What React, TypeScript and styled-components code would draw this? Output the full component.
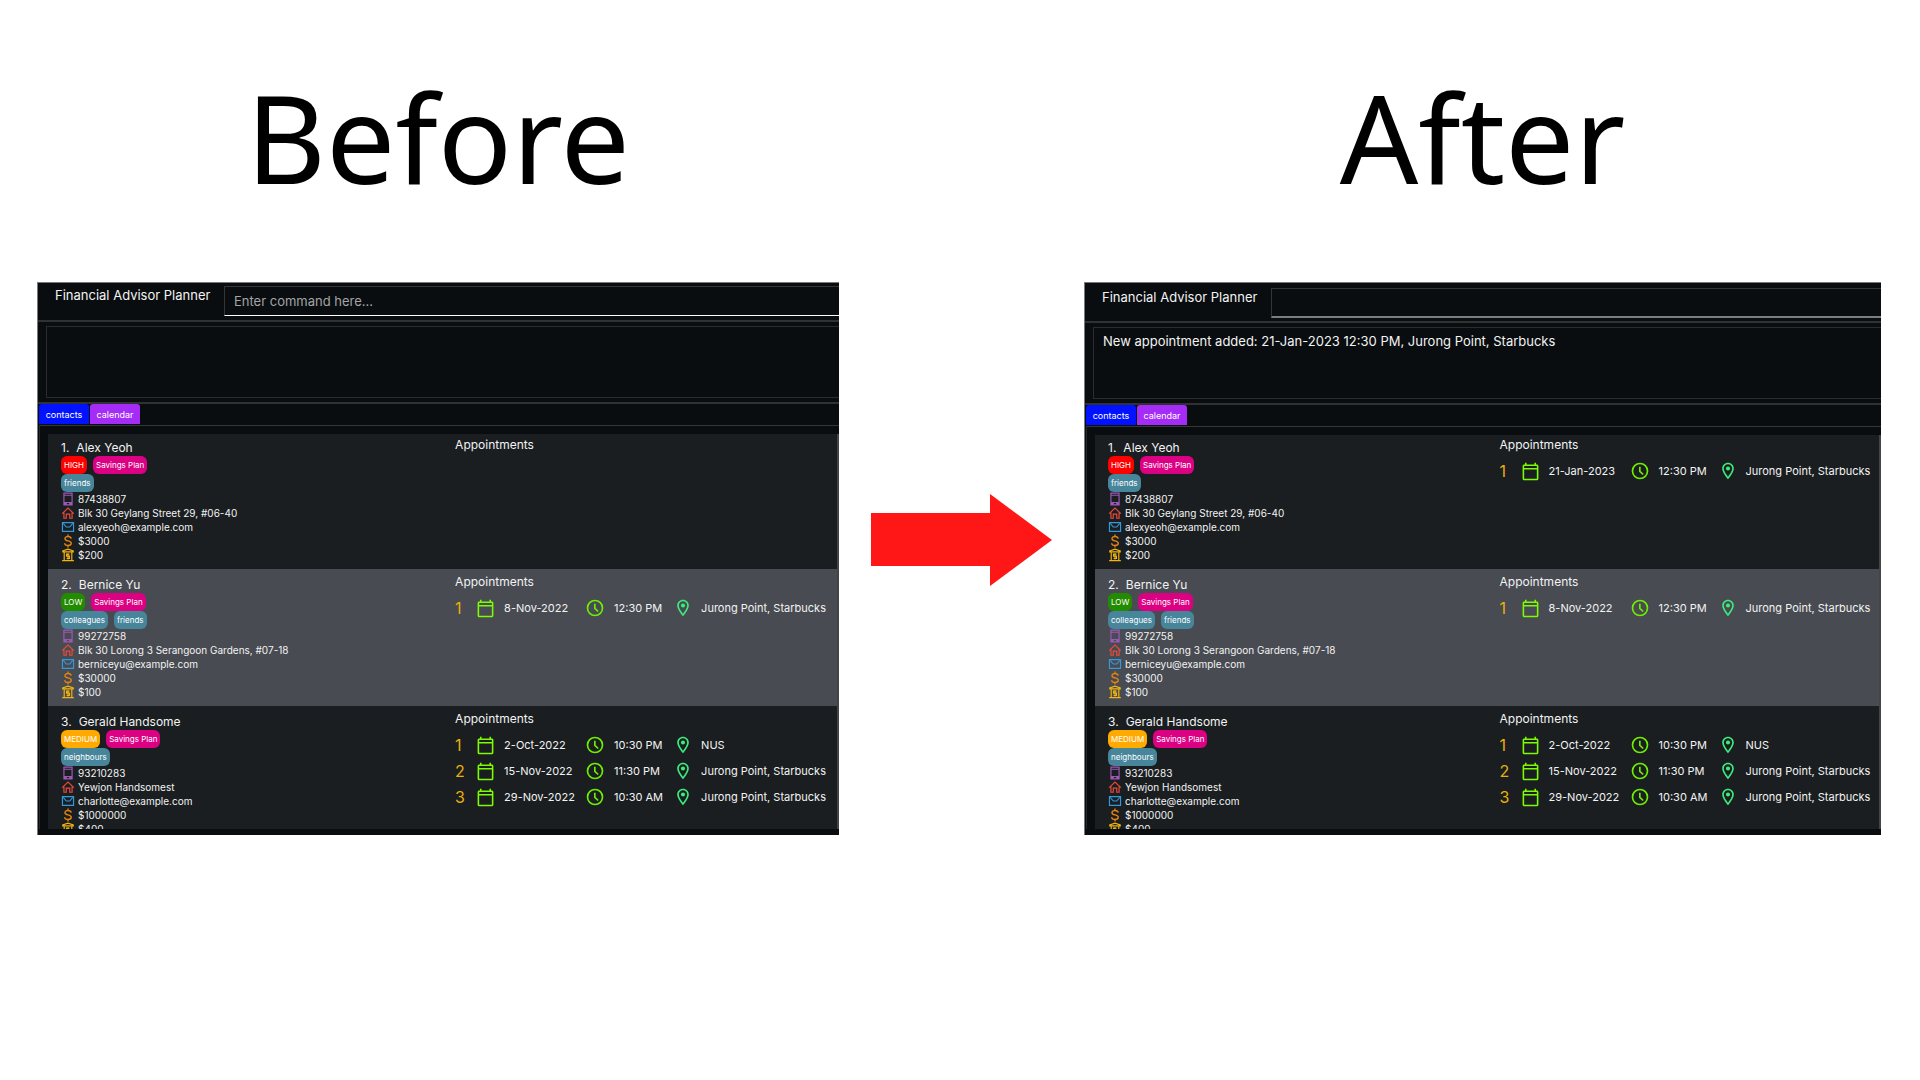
import React from "react";
import styled, { createGlobalStyle } from "styled-components";

const GlobalStyle = createGlobalStyle`
  * { box-sizing: border-box; }
  body {
    margin: 0;
    background: #fff;
    font-family: Inter, "Liberation Sans", sans-serif;
  }
`;

const Page = styled.main`
  display: grid;
  grid-template-columns: minmax(0, 802fr) 245px minmax(0, 797fr);
  padding: 58px 39px 60px 37px;
`;

const Column = styled.section`
  min-width: 0;
`;

const Heading = styled.h1`
  margin: 0;
  height: 224px;
  font-family: "Noto Sans", "Open Sans", sans-serif;
  font-weight: 400;
  font-size: 123px;
  line-height: 158px;
  text-align: center;
  color: #000;
`;

const ArrowHolder = styled.div`
  display: flex;
  justify-content: center;
  padding-top: 436px;
`;

const Window = styled.div`
  padding-bottom: 6px;
  overflow: hidden;
  border-top: 1px solid #77797a;
  border-left: 1px solid #77797a;
  background: #090d0f;
  color: #f2f3f3;
`;

const CommandBar = styled.div<{ $active: boolean }>`
  display: grid;
  grid-template-columns: 186px minmax(0, 1fr);
  height: ${p => (p.$active ? 37 : 38)}px;
  padding-top: ${p => (p.$active ? 3 : 5)}px;
`;

const AppTitle = styled.label`
  padding-left: 17px;
  font-size: 13px;
  line-height: 18px;
  white-space: nowrap;
`;

const CommandInput = styled.input<{ $active: boolean }>`
  height: 30px;
  width: 100%;
  padding: 0 9px;
  border: 1px solid #333536;
  border-right: 0;
  border-bottom: ${p => (p.$active ? "1px solid #fff" : "2px solid #7a7e80")};
  border-radius: 0;
  outline: 0;
  background: transparent;
  color: #fff;
  font: 13px Inter, sans-serif;
  &::placeholder {
    color: #a3a5a6;
    opacity: 1;
  }
`;

const ResultArea = styled.div`
  padding: 4px 0 4px 8px;
  border: solid #2f3132;
  border-width: 2px 0;
`;

const ResultBox = styled.output`
  display: block;
  height: 72px;
  padding: 4px 9px;
  border: 1px solid #2a2c2d;
  border-right: 0;
  font-size: 13px;
  line-height: 18px;
`;

const TabBar = styled.div`
  display: flex;
  gap: 1px;
  padding: 0 0 1px 1px;
`;

const Tab = styled.button<{ $color: string }>`
  min-width: 50px;
  height: 20px;
  padding: 0 6px;
  border: 0;
  border-radius: 3px 3px 0 0;
  background: ${p => p.$color};
  color: #fff;
  font: 9px Inter, sans-serif;
`;

const TabPane = styled.div`
  margin-left: 1px;
  padding: 8px 0 0 8px;
  border-top: 1px solid #343637;
  border-left: 1px solid #25282a;
`;

const ContactList = styled.ol<{ $active: boolean }>`
  height: ${p => (p.$active ? 395 : 394)}px;
  margin: 0;
  padding: 0;
  list-style: none;
  overflow: hidden;
  border-right: 2px solid #424546;
`;

const Contact = styled.li<{ $selected: boolean; $scrolled: number }>`
  display: grid;
  grid-template-columns: 51.6% minmax(0, 1fr);
  height: 137px;
  margin-top: -${p => p.$scrolled}px;
  background: ${p => (p.$selected ? "#484b51" : "#1a1e20")};
`;

const Details = styled.div`
  padding: 6px 0 0 13px;
`;

const Name = styled.h2`
  display: flex;
  gap: 7px;
  height: 18px;
  margin: 0;
  font-weight: 400;
  font-size: 12px;
  line-height: 20px;
`;

const Tags = styled.div`
  display: flex;
  gap: 6px;
  height: 18px;
`;

const Tag = styled.span<{ $color: string }>`
  padding: 0 3px;
  border-radius: 6px;
  background: ${p => p.$color};
  color: #fff;
  font-size: 8px;
  line-height: 18px;
`;

const Field = styled.div`
  display: flex;
  align-items: center;
  gap: 3px;
  height: 14px;
  font-size: 10px;
  line-height: 14px;
  white-space: nowrap;
  svg { flex: none; }
`;

const Appointments = styled.div`
  padding-top: 4px;
`;

const AppointmentsTitle = styled.h3`
  margin: 0 0 4px;
  font-weight: 400;
  font-size: 12px;
  line-height: 18px;
`;

const Appointment = styled.div`
  display: grid;
  grid-template-columns: 21px 28px 81px 29px 59px 28px minmax(0, 1fr);
  align-items: center;
  height: 26px;
  font-size: 11px;
  line-height: 18px;
  white-space: nowrap;
  svg { display: block; }
`;

const Index = styled.span`
  color: #e6b00b;
  font-size: 16px;
`;

const TAG_COLORS: Record<string, string> = {
  HIGH: "#ff0000",
  MEDIUM: "#ffaa00",
  LOW: "#228b00",
  "Savings Plan": "#dc0083",
};

const PhoneIcon = () => (
  <svg width="14" height="14" viewBox="0 0 24 24" fill="none" stroke="#9b59b6" strokeWidth="2">
    <path d="M5 2h14v20H5zM5 5.500h14M5 18h14M5 20h5M14 20h5" />
  </svg>
);
const HomeIcon = () => (
  <svg width="14" height="14" viewBox="0 0 24 24" fill="none" stroke="#e74c3c" strokeWidth="2">
    <path d="M2 13 12 3.500 22 13M5 11v10h4v-7h6v7h4V11" />
  </svg>
);
const MailIcon = () => (
  <svg width="14" height="14" viewBox="0 0 24 24" fill="none" stroke="#3498db" strokeWidth="2">
    <path d="M2.500 4.500h19v15h-19zM4 6l5 6h6l5-6" />
  </svg>
);
const DollarIcon = () => (
  <svg width="14" height="14" viewBox="0 0 24 24" fill="none" stroke="#e08214" strokeWidth="2.400">
    <path d="M17.500 8c-.4-2.400-2.400-3.600-5.500-3.600S6.800 5.800 6.800 8c0 5 10.800 2.800 10.800 8 0 2.300-2.200 3.700-5.600 3.700S6.500 18.300 6.200 15.800M12 1v3.500M12 19.500V23" />
  </svg>
);
const BankIcon = () => (
  <svg width="14" height="14" viewBox="0 0 24 24" fill="none" stroke="#f1b40f" strokeWidth="2">
    <path d="M3 6.500V5l9-3 9 3v1.500zM5.500 7v14M18.500 7v14M2 21.500h20" />
    <path d="M14.500 10.500h-5V14h5v4h-5M12 9v10.500" />
  </svg>
);
const CalendarIcon = () => (
  <svg width="19" height="19" viewBox="0 0 24 24" fill="#7cfc00">
    <path d="M20 3h-1V1h-2v2H7V1H5v2H4c-1.100 0-2 .9-2 2v16c0 1.100.9 2 2 2h16c1.100 0 2-.9 2-2V5c0-1.100-.9-2-2-2zm0 18H4V9.500h16V21zm0-13.500H4V5h16v2.500z" />
  </svg>
);
const ClockIcon = () => (
  <svg width="20" height="20" viewBox="0 0 24 24" fill="none" stroke="#6fee00" strokeWidth="2">
    <circle cx="12" cy="12" r="9" />
    <path d="M11.800 7v5.400l4 3.800" />
  </svg>
);
const PinIcon = () => (
  <svg width="20" height="20" viewBox="0 0 24 24" fill="#3dea7c">
    <path d="M12 2C8.100 2 5 5.100 5 9c0 5.300 7 13 7 13s7-7.700 7-13c0-3.900-3.100-7-7-7zM7 9c0-2.800 2.200-5 5-5s5 2.200 5 5c0 2.900-2.900 7.200-5 9.900C9.900 16.200 7 11.900 7 9z" />
    <circle cx="12" cy="9" r="2.500" />
  </svg>
);

type Visit = [date: string, time: string, place: string];
type Person = {
  name: string;
  tags: string[];
  groups: string[];
  phone: string;
  address: string;
  email: string;
  income: string;
  monthly: string;
  visits: Visit[];
};

const CAFE = "Jurong Point, Starbucks";

const people = (alexVisits: Visit[]): Person[] => [
  {
    name: "Alex Yeoh", tags: ["HIGH", "Savings Plan"], groups: ["friends"], phone: "87438807",
    address: "Blk 30 Geylang Street 29, #06-40", email: "alexyeoh@example.com",
    income: "$3000", monthly: "$200", visits: alexVisits,
  },
  {
    name: "Bernice Yu", tags: ["LOW", "Savings Plan"], groups: ["colleagues", "friends"], phone: "99272758",
    address: "Blk 30 Lorong 3 Serangoon Gardens, #07-18", email: "berniceyu@example.com",
    income: "$30000", monthly: "$100", visits: [["8-Nov-2022", "12:30 PM", CAFE]],
  },
  {
    name: "Gerald Handsome", tags: ["MEDIUM", "Savings Plan"], groups: ["neighbours"], phone: "93210283",
    address: "Yewjon Handsomest", email: "charlotte@example.com",
    income: "$1000000", monthly: "$400",
    visits: [
      ["2-Oct-2022", "10:30 PM", "NUS"],
      ["15-Nov-2022", "11:30 PM", CAFE],
      ["29-Nov-2022", "10:30 AM", CAFE],
    ],
  },
];

function Planner({ id, active, message, contacts }: {
  id: string; active: boolean; message: string; contacts: Person[];
}) {
  const scrolled = active ? 2 : 3;
  return (
    <Window>
      <CommandBar $active={active}>
        <AppTitle htmlFor={id}>Financial Advisor Planner</AppTitle>
        <CommandInput id={id} $active={active} placeholder={active ? "Enter command here..." : undefined} />
      </CommandBar>
      <ResultArea>
        <ResultBox htmlFor={id}>{message}</ResultBox>
      </ResultArea>
      <TabBar>
        <Tab type="button" $color="#0012ff">contacts</Tab>
        <Tab type="button" $color="#a42cf6">calendar</Tab>
      </TabBar>
      <TabPane>
        <ContactList $active={active}>
          {contacts.map((person, i) => (
            <Contact key={person.name} $selected={i === 1} $scrolled={i === 0 ? scrolled : 0}>
              <Details>
                <Name><span>{i + 1}.</span><span>{person.name}</span></Name>
                <Tags>{person.tags.map(t => <Tag key={t} $color={TAG_COLORS[t]}>{t}</Tag>)}</Tags>
                <Tags>{person.groups.map(t => <Tag key={t} $color="#47859b">{t}</Tag>)}</Tags>
                <Field><PhoneIcon />{person.phone}</Field>
                <Field><HomeIcon />{person.address}</Field>
                <Field><MailIcon />{person.email}</Field>
                <Field><DollarIcon />{person.income}</Field>
                <Field><BankIcon />{person.monthly}</Field>
              </Details>
              <Appointments>
                <AppointmentsTitle>Appointments</AppointmentsTitle>
                {person.visits.map(([date, time, place], n) => (
                  <Appointment key={date}>
                    <Index>{n + 1}</Index>
                    <CalendarIcon />
                    <span>{date}</span>
                    <ClockIcon />
                    <span>{time}</span>
                    <PinIcon />
                    <span>{place}</span>
                  </Appointment>
                ))}
              </Appointments>
            </Contact>
          ))}
        </ContactList>
      </TabPane>
    </Window>
  );
}

export default function App() {
  return (
    <>
      <GlobalStyle />
      <Page>
        <Column>
          <Heading>Before</Heading>
          <Planner id="command-before" active message="" contacts={people([])} />
        </Column>
        <ArrowHolder>
          <svg width="181" height="93" viewBox="0 0 181 93" fill="#ff1616">
            <path d="M0 19h119V0l62 46L119 92V72H0z" />
          </svg>
        </ArrowHolder>
        <Column>
          <Heading>After</Heading>
          <Planner
            id="command-after"
            active={false}
            message="New appointment added: 21-Jan-2023 12:30 PM, Jurong Point, Starbucks"
            contacts={people([["21-Jan-2023", "12:30 PM", CAFE]])}
          />
        </Column>
      </Page>
    </>
  );
}
